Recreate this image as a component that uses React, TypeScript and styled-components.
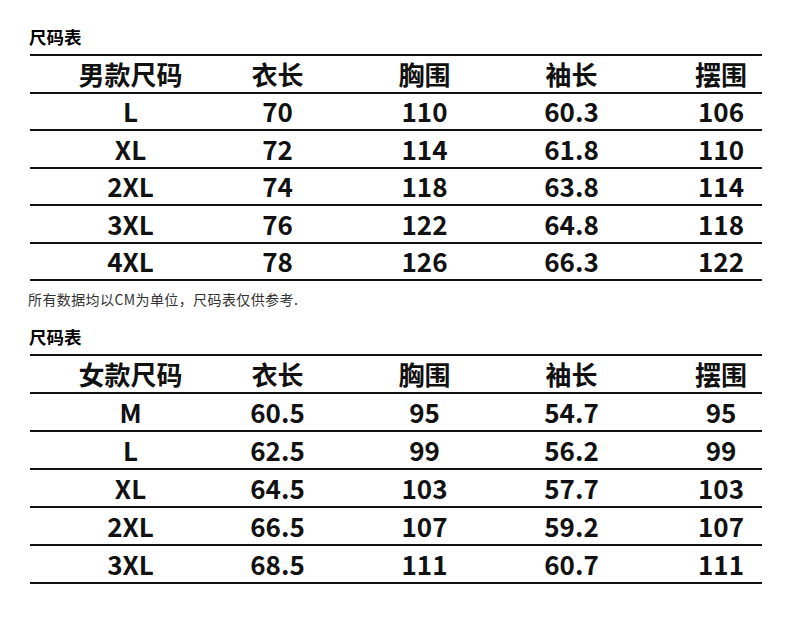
import styled, { createGlobalStyle } from 'styled-components';

type Row = string[];

const menHeader: Row = ['男款尺码', '衣长', '胸围', '袖长', '摆围'];
const menRows: Row[] = [
    ['L', '70', '110', '60.3', '106'],
    ['XL', '72', '114', '61.8', '110'],
    ['2XL', '74', '118', '63.8', '114'],
    ['3XL', '76', '122', '64.8', '118'],
    ['4XL', '78', '126', '66.3', '122'],
];

const womenHeader: Row = ['女款尺码', '衣长', '胸围', '袖长', '摆围'];
const womenRows: Row[] = [
    ['M', '60.5', '95', '54.7', '95'],
    ['L', '62.5', '99', '56.2', '99'],
    ['XL', '64.5', '103', '57.7', '103'],
    ['2XL', '66.5', '107', '59.2', '107'],
    ['3XL', '68.5', '111', '60.7', '111'],
];

function SizeTable({ header, rows, rowHeight }: { header: Row; rows: Row[]; rowHeight: number }) {
    return (
        <Table>
            <TableRow $h={rowHeight}>
                {header.map((h) => (
                    <Cell key={h}>{h}</Cell>
                ))}
            </TableRow>
            {rows.map((row) => (
                <TableRow $h={rowHeight} key={row[0]}>
                    {row.map((v, i) => (
                        <Cell key={i}>{v}</Cell>
                    ))}
                </TableRow>
            ))}
        </Table>
    );
}

export default function App() {
    return (
        <Page>
            <GlobalStyle />
            <Title>尺码表</Title>
            <SizeTable header={menHeader} rows={menRows} rowHeight={37.5} />
            <Note>所有数据均以CM为单位，尺码表仅供参考.</Note>
            <Title $second>尺码表</Title>
            <SizeTable header={womenHeader} rows={womenRows} rowHeight={38} />
        </Page>
    );
}

const GlobalStyle = createGlobalStyle`
    html, body {
        margin: 0;
        background: #fff;
    }
    body {
        font-family: "Noto Sans CJK SC", "Noto Sans", sans-serif;
        color: #111;
    }
`;

const Page = styled.div`
    width: 790px;
    height: 634px;
    padding: 0 28px 0 30px;
    box-sizing: border-box;
`;

const Title = styled.div<{ $second?: boolean }>`
    margin-top: ${({ $second }) => ($second ? '16px' : '25px')};
    margin-bottom: 5px;
    margin-left: -1px;
    height: 24px;
    line-height: 24px;
    font-size: 17.5px;
    font-weight: 700;
    color: #000;
`;

const Table = styled.div`
    width: 732px;
    border-top: 2px solid #111;
    box-sizing: border-box;
`;

const TableRow = styled.div<{ $h: number }>`
    display: grid;
    grid-template-columns: repeat(4, 147px) 152px;
    padding-left: 27px;
    height: ${({ $h }) => $h}px;
    box-sizing: border-box;
    border-bottom: 2px solid #111;
    align-items: center;
`;

const Cell = styled.div`
    text-align: center;
    font-size: 26px;
    font-weight: 700;
    line-height: 1;
    color: #111;
`;

const Note = styled.div`
    margin-top: 8px;
    margin-left: -2px;
    height: 20px;
    line-height: 20px;
    font-size: 14px;
    letter-spacing: 0.4px;
    color: #333;
`;
